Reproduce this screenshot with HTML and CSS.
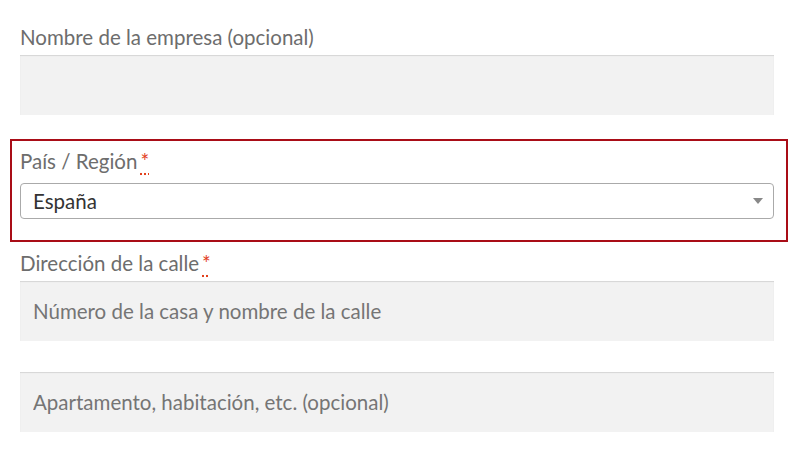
FILE: index.html
```html
<!DOCTYPE html>
<html lang="es">
<head>
    <meta charset="UTF-8">
    <meta name="viewport" content="width=device-width, initial-scale=1.0">
    <title>Facturación</title>
    <link rel="stylesheet" href="styles.css">
</head>
<body>
    <form class="billing-form">
        <p class="form-row">
            <label for="company">Nombre de la empresa (opcional)</label>
            <input type="text" id="company" class="input-text">
        </p>
        <div class="form-row country-row">
            <label for="country">País / Región<abbr class="required" title="obligatorio">*</abbr></label>
            <div class="select-box" id="country">
                <span>España</span>
                <span class="arrow"></span>
            </div>
        </div>
        <p class="form-row address-row">
            <label for="address1">Dirección de la calle<abbr class="required" title="obligatorio">*</abbr></label>
            <input type="text" id="address1" class="input-text" placeholder="Número de la casa y nombre de la calle">
        </p>
        <p class="form-row">
            <input type="text" id="address2" class="input-text" placeholder="Apartamento, habitación, etc. (opcional)">
        </p>
    </form>
</body>
</html>
```

FILE: styles.css
```css
body {
    font-family: "Source Sans Pro", Lato, "Open Sans", sans-serif;
    background-color: #fff;
    margin: 0;
    padding: 0;
}

.billing-form {
    padding: 22px 26px 0 20px;
}

.form-row {
    margin: 0 0 24px 0;
}

.address-row {
    margin-bottom: 31px;
}

.form-row label {
    display: block;
    font-size: 20.5px;
    line-height: 31px;
    margin-bottom: 2px;
    color: #6d6d6d;
}

.required {
    color: #e2401c;
    text-decoration: underline dotted;
    text-underline-offset: 4px;
    margin-left: 3px;
    cursor: help;
}

.input-text {
    display: block;
    box-sizing: border-box;
    width: 100%;
    height: 60px;
    padding: 0 13px;
    border: none;
    background-color: #f2f2f2;
    box-shadow: inset 0 1px 1px rgba(0, 0, 0, 0.12);
    font-family: inherit;
    font-size: 20.5px;
    color: #43454b;
}

.input-text::placeholder {
    color: #757575;
}

.country-row {
    margin: 0 -14px 6px -10px;
    padding: 5px 12px 21px 8px;
    border: 2px solid #a90d17;
}

.country-row label {
    margin-bottom: 6px;
}

.select-box {
    display: flex;
    align-items: center;
    justify-content: space-between;
    height: 36px;
    box-sizing: border-box;
    padding: 0 12px;
    border: 1px solid #aaa;
    border-radius: 4px;
    background-color: #fff;
    font-size: 20.5px;
    color: #333;
}

.arrow {
    width: 0;
    height: 0;
    border-left: 5px solid transparent;
    border-right: 5px solid transparent;
    border-top: 6px solid #888;
    margin-right: -2px;
}
```
